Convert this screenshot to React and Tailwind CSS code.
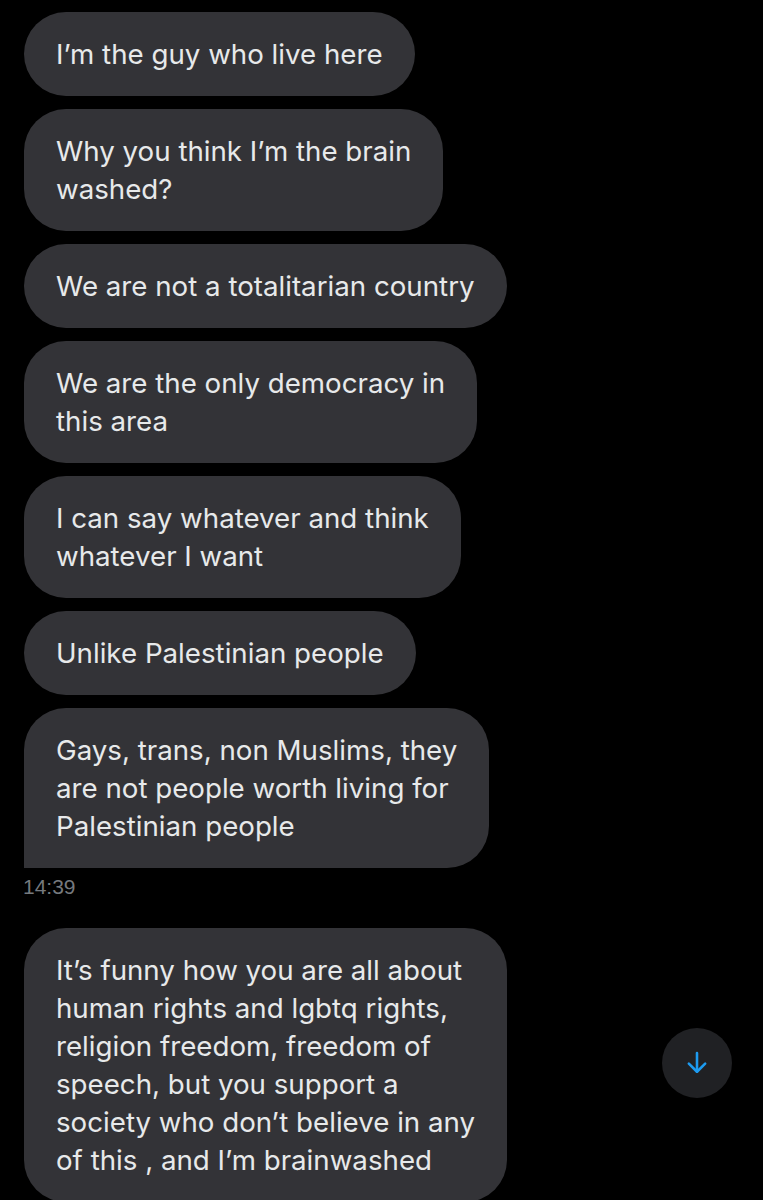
import React from "react";

const Bubble = ({ lines, square }) => (
  <div
    className={`self-start bg-[#333337] text-[#e7e9ea] px-[32px] py-[23px] text-[27.7px] leading-[38px] rounded-[42px] ${square ? "rounded-bl-none" : ""}`}
    style={{ fontFamily: "Inter, 'Noto Sans', sans-serif" }}
  >
    {lines.map((l, i) => (
      <div key={i} className="whitespace-nowrap">{l}</div>
    ))}
  </div>
);

export default function App() {
  return (
    <div className="relative w-[763px] h-[1200px] bg-black overflow-hidden">
      <div className="flex flex-col gap-[13px] pl-[24px] pt-[12px]">
        <Bubble lines={["I’m the guy who live here"]} />
        <Bubble lines={["Why you think I’m the brain", "washed?"]} />
        <Bubble lines={["We are not a totalitarian country"]} />
        <Bubble lines={["We are the only democracy in", "this area"]} />
        <Bubble lines={["I can say whatever and think", "whatever I want"]} />
        <Bubble lines={["Unlike Palestinian people"]} />
        <div className="flex flex-col">
          <Bubble square lines={["Gays, trans, non Muslims, they", "are not people worth living for", "Palestinian people"]} />
          <div className="mt-[7px] -ml-[1px] text-[21px] leading-[24px] text-[#75797e]" style={{ fontFamily: "'Liberation Sans', Arial, sans-serif" }}>14:39</div>
        </div>
        <div className="mt-[16px] flex flex-col">
          <Bubble
            lines={[
              "It’s funny how you are all about",
              "human rights and lgbtq rights,",
              "religion freedom, freedom of",
              "speech, but you support a",
              "society who don’t believe in any",
              "of this , and I’m brainwashed",
            ]}
          />
        </div>
      </div>
      <div className="absolute left-[662px] top-[1028px] w-[70px] h-[70px] rounded-full bg-[#202124] flex items-center justify-center">
        <svg width="28" height="28" viewBox="0 0 24 24" fill="none" stroke="#1d9bf0" strokeWidth="2.2" strokeLinecap="round" strokeLinejoin="round">
          <path d="M12 3.5v16" />
          <path d="M5 12.5l7 7 7-7" />
        </svg>
      </div>
    </div>
  );
}
